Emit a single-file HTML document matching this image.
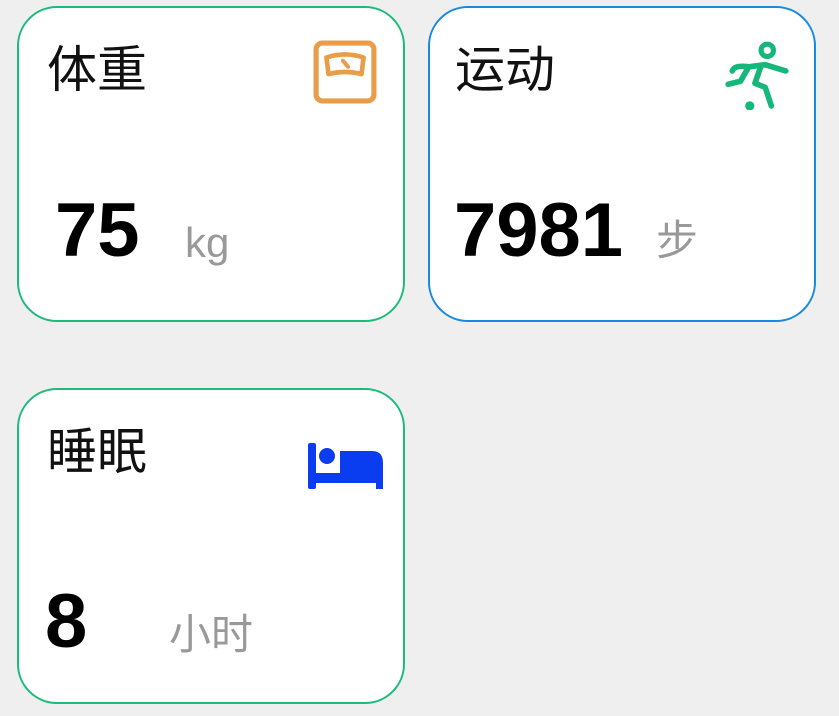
<html><head><style>
body{margin:0;background:#efefef;width:839px;height:716px;position:relative;overflow:hidden;font-family:"Liberation Sans","Noto Sans CJK SC",sans-serif}
.c{position:absolute;width:388px;height:316px;background:#fff;border:2px solid #1dbb7a;border-radius:40px;box-sizing:border-box}
.t{position:absolute;left:28px;top:37px;font-size:50px;color:#111;line-height:1}
.n{position:absolute;font-size:76px;font-weight:bold;color:#000;line-height:1}
.u{position:absolute;font-size:42px;color:#999;line-height:1}
svg{position:absolute}
</style></head><body>
<div class="c" style="left:17px;top:6px">
<div class="t">体重</div>
<svg style="left:294px;top:32px" width="64" height="64" viewBox="0 0 62 62"><rect x="3" y="3" width="56" height="56" rx="6" fill="none" stroke="#ea9d48" stroke-width="5"/><path d="M13 17 Q31 11 49 17 L47 33 Q31 29 15 33 Z" fill="none" stroke="#ea9d48" stroke-width="4.5" stroke-linejoin="round"/><path d="M29 20 L34 26" stroke="#ea9d48" stroke-width="4" stroke-linecap="round"/></svg>
<div class="n" style="left:36px;top:185px">75</div>
<div class="u" style="left:166px;top:214px">kg</div>
</div>
<div class="c" style="left:428px;top:6px;border-color:#1a8ae0">
<div class="t" style="left:25px">运动</div>
<svg style="left:294px;top:30px" width="68" height="72" viewBox="0 0 66 70"><circle cx="42" cy="12" r="6" fill="none" stroke="#16b77a" stroke-width="5"/><path d="M4 45 L16 42 L24 28 L40 26 L60 32 M24 28 Q10 26 8 32 M36 27 L30 44 L40 48 L46 66" fill="none" stroke="#16b77a" stroke-width="5.5" stroke-linecap="round" stroke-linejoin="round"/><circle cx="25" cy="66" r="4.5" fill="#16b77a"/></svg>
<div class="n" style="left:24px;top:185px">7981</div>
<div class="u" style="left:226px;top:212px">步</div>
</div>
<div class="c" style="left:17px;top:388px">
<div class="t">睡眠</div>
<svg style="left:289px;top:53px" width="76" height="46" viewBox="0 0 76 46"><rect x="0" y="0" width="8" height="46" rx="2" fill="#0a3df0"/><circle cx="19" cy="13" r="8" fill="#0a3df0"/><path d="M32 8 H64 Q75 8 75 20 V46 H68 V40 H8 V30 H32 Z" fill="#0a3df0"/></svg>
<div class="n" style="left:26px;top:194px">8</div>
<div class="u" style="left:150px;top:224px">小时</div>
</div>
</body></html>
